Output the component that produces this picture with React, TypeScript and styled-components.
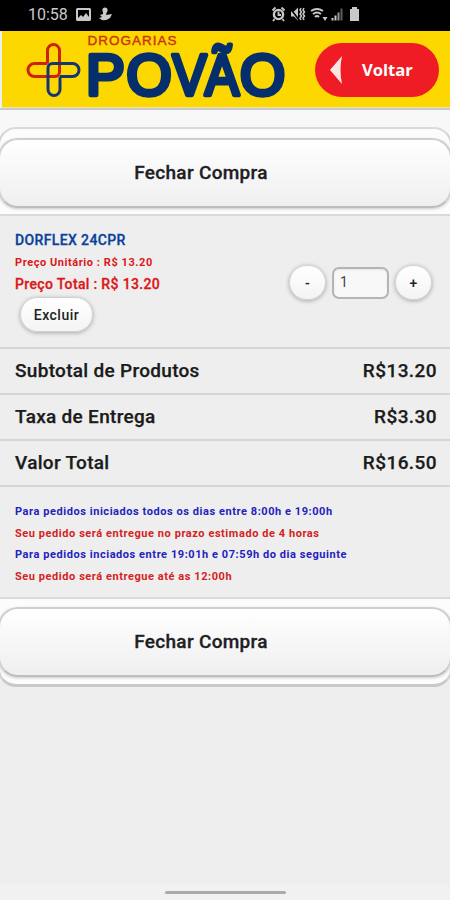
import React from "react";
import styled, { createGlobalStyle } from "styled-components";

const GlobalStyle = createGlobalStyle`
  * { box-sizing: border-box; }
  body { margin: 0; background: #eee; font-family: Roboto, "Liberation Sans", sans-serif; }
`;

const Screen = styled.div`
  width: 450px;
  height: 900px;
  overflow: hidden;
  display: flex;
  flex-direction: column;
  background: #eeeeee;
  color: #1b1b1b;
`;

const StatusBar = styled.header`
  height: 31px;
  flex: none;
  background: #000;
  color: #c9c9c9;
  display: flex;
  align-items: flex-start;
  justify-content: space-between;
  padding: 0 89px 0 28px;
`;

const StatusGroup = styled.div`
  display: flex;
  height: 28px;
  align-items: center;
`;

const Clock = styled.span`
  font-size: 16px;
  width: 48px;
  white-space: nowrap;
`;

const Banner = styled.div`
  height: 77px;
  flex: none;
  margin-left: 2px;
  padding: 12px 11px 0 22px;
  background: #fcd800;
  border-bottom: 1px solid #eee5a0;
  display: flex;
  justify-content: space-between;
`;

const LogoSvg = styled.svg`
  display: block;
  margin-top: -12px;
`;

const BackButton = styled.button`
  width: 124px;
  height: 54px;
  border: 0;
  border-radius: 27px;
  background: #ef1c25;
  color: #fff;
  display: flex;
  align-items: center;
  padding: 0 0 1px 15px;
  gap: 19px;
  font: bold 16.6px "Open Sans", sans-serif;
`;

const Main = styled.main`
  flex: 1;
  border-top: 2px solid #c9c9c9;
  background: linear-gradient(#f8f8f8 60px, #eee 60px);
  display: flex;
  flex-direction: column;
`;

const Spacer = styled.div`
  height: 17px;
  flex: none;
`;

const CheckoutStrip = styled.section<{ $end?: boolean }>`
  height: ${(p) => (p.$end ? 90 : 89)}px;
  flex: none;
  padding-top: ${(p) => (p.$end ? 8 : 9)}px;
  margin: 0 -2px;
  background: #fcfcfc;
  border: 2px solid #d3d3d3;
  border-bottom: ${(p) => (p.$end ? "3px solid #c9c9c9" : "2px solid #dadada")};
  border-top-color: #dadada;
  border-radius: ${(p) => (p.$end ? "0 0 18px 18px" : "18px 18px 0 0")};
`;

const CheckoutButton = styled.button`
  display: block;
  width: 454px;
  height: 70px;
  margin-left: -2px;
  padding: 0 48px 1px 0;
  border: 2px solid #cfcfcf;
  border-bottom-color: #bdbdbd;
  border-radius: 20px;
  background: linear-gradient(#fff, #efefef);
  box-shadow: 0 1px 3px rgba(0, 0, 0, 0.2);
  color: #1d2023;
  font: 500 19px Roboto, sans-serif;
  letter-spacing: 0.3px;
  -webkit-text-stroke: 0.3px;
`;

const Product = styled.section`
  height: 131px;
  flex: none;
  display: flex;
  justify-content: space-between;
  padding: 15px 18px 0 15px;
`;

const ProductInfo = styled.div`
  display: flex;
  flex-direction: column;
  align-items: flex-start;
  white-space: nowrap;
`;

const ProductName = styled.h2`
  margin: 0;
  font: 500 14px/19px Roboto, sans-serif;
  letter-spacing: 0.37px;
  color: #0b429b;
  -webkit-text-stroke: 0.3px;
`;

const Price = styled.span<{ $total?: boolean }>`
  color: #dc1718;
  font-weight: ${(p) => (p.$total ? 500 : 700)};
  font-size: ${(p) => (p.$total ? 14 : 11)}px;
  line-height: ${(p) => (p.$total ? 18 : 16)}px;
  margin-top: ${(p) => (p.$total ? 4 : 5)}px;
  letter-spacing: ${(p) => (p.$total ? 0.34 : 0.56)}px;
  -webkit-text-stroke: ${(p) => (p.$total ? 0.3 : 0)}px;
`;

const PillButton = styled.button<{ $round?: boolean }>`
  width: ${(p) => (p.$round ? 37 : 73)}px;
  height: 35px;
  padding: 0;
  border: 1px solid #d0d0d0;
  border-radius: 18px;
  background: linear-gradient(#fff, #f4f4f4);
  box-shadow: 0 1px 4px rgba(0, 0, 0, 0.3);
  color: #222;
  font: 500 14px Roboto, sans-serif;
`;

const RemoveButton = styled(PillButton)`
  margin: 4px 0 0 5px;
  letter-spacing: 0.5px;
`;

const Stepper = styled.div`
  display: flex;
  align-items: center;
  gap: 6px;
  height: 35px;
  margin-top: 34px;
`;

const QuantityInput = styled.input`
  width: 57px;
  height: 32px;
  border: 2px solid #b5b5b5;
  border-radius: 7px;
  background: #f8f8f8;
  padding: 0 6px 2px;
  color: #444;
  font: 14px Roboto, sans-serif;
  box-shadow: inset 0 1px 2px rgba(0, 0, 0, 0.08);
`;

const TotalRow = styled.div<{ $height: number }>`
  height: ${(p) => p.$height}px;
  flex: none;
  border-top: 2px solid #d6d6d6;
  padding: 0 13px 1px 15px;
  display: flex;
  align-items: center;
  justify-content: space-between;
  font-size: 19px;
  font-weight: 500;
  letter-spacing: 0.3px;
  -webkit-text-stroke: 0.25px;
`;

const Amount = styled.span`
  letter-spacing: 0.42px;
`;

const Notices = styled.section`
  height: 112px;
  flex: none;
  border-top: 2px solid #d6d6d6;
  padding: 14px 15px 0;
  display: flex;
  flex-direction: column;
`;

const Notice = styled.p<{ $alert?: boolean }>`
  margin: 0;
  height: 21.7px;
  font-size: 11px;
  line-height: 21.7px;
  font-weight: 700;
  letter-spacing: 0.56px;
  white-space: nowrap;
  color: ${(p) => (p.$alert ? "#d42222" : "#2422bd")};
`;

const GestureBar = styled.footer`
  height: 16px;
  flex: none;
  background: #f1f1f1;
  padding: 7px 0 0 165px;

  &::before {
    content: "";
    display: block;
    width: 121px;
    height: 3px;
    border-radius: 2px;
    background: #aaa;
  }
`;

const Wordmark = styled.g`
  font: 58px "Liberation Sans", sans-serif;
  fill: #052e6d;
  stroke: #052e6d;
  stroke-width: 4.6px;
  stroke-linejoin: round;
`;

const Logo = () => (
  <LogoSvg width="268" height="76" viewBox="24 31 268 76" fill="none">
    <path
      d="M47.500 63.500V50.500a6 6 0 0 1 12 0V72a4.500 4.500 0 0 1-4.500 4.500H34.500a6.500 6.500 0 0 1 0-13H47.500"
      stroke="#cc2310"
      strokeWidth="3"
    />
    <path
      d="M60 76.500V89.500a6 6 0 0 1-12 0V68a4.500 4.500 0 0 1 4.500-4.500H72.500a6.500 6.500 0 0 1 0 13H60"
      stroke="#143473"
      strokeWidth="3"
    />
    <text
      x="87.500"
      y="45"
      textLength="89"
      fontFamily="Liberation Sans, sans-serif"
      fontSize="13.500"
      fill="#c93310"
      stroke="#c93310"
      strokeWidth="0.400"
    >
      DROGARIAS
    </text>
    <Wordmark>
      <text x="86 126.500" y="94.500">PO</text>
      <text x="172.500" y="94.500" textLength="34" lengthAdjust="spacingAndGlyphs">V</text>
      <text x="205" y="94.500" textLength="34" lengthAdjust="spacingAndGlyphs">Ã</text>
      <text x="240" y="94.500">O</text>
    </Wordmark>
  </LogoSvg>
);

const PictureIcon = () => (
  <svg width="15" height="13" viewBox="0 0 15 13">
    <path
      fill="#c9c9c9"
      fillRule="evenodd"
      d="M1.500 0h12q1.500 0 1.500 1.500v10q0 1.500-1.500 1.500h-12Q0 13 0 11.500v-10Q0 0 1.500 0zM2 2v8l3-3 2 2 3-4 3 4V2z"
    />
  </svg>
);

const FigureIcon = styled.svg`
  margin-left: 8px;
`;

const StatusIcons = () => (
  <svg width="90" height="16" viewBox="0 0 90 16" fill="none" stroke="#c9c9c9">
    <circle cx="7.500" cy="8.500" r="4.600" strokeWidth="2.400" />
    <path d="M7.500 5.500V9H10M1.500 4.500 4.500 1.500M10.500 1.500 13.500 4.500M3.500 13 2 15M11.500 13l1.500 2" strokeWidth="1.800" />
    <path d="M20 5.500h3l4-4v13l-4-4h-3z" fill="#c9c9c9" stroke="none" />
    <path d="M19 2l9 12" stroke="#000" strokeWidth="1.500" />
    <path d="M30 2l-1 2 1.500 2-1.500 2 1.500 2-1.500 2 1 2M33 2l-1 2 1.500 2-1.500 2 1.500 2-1.500 2 1 2" strokeWidth="1.500" />
    <path d="M40 5q6-4 12 0M42 8q4-3 8 0M44 11q2-2 4 0" strokeWidth="2" />
    <path d="M51.500 11h5l-2.500 4z" fill="#c9c9c9" stroke="none" />
    <path d="M61.500 12v2.500M64.500 9.500v5" strokeWidth="2" />
    <path d="M67.500 6.500v8" stroke="#999" strokeWidth="2" />
    <path d="M70.500 2.500v12" stroke="#5e5e5e" strokeWidth="2" />
    <path d="M79 3h2V1h5v2h2v12h-9z" fill="#c9c9c9" stroke="none" />
  </svg>
);

const totals = [
  { label: "Subtotal de Produtos", value: "R$13.20", height: 46 },
  { label: "Taxa de Entrega", value: "R$3.30", height: 46 },
  { label: "Valor Total", value: "R$16.50", height: 46 },
];

const notices = [
  { text: "Para pedidos iniciados todos os dias entre 8:00h e 19:00h", alert: false },
  { text: "Seu pedido será entregue no prazo estimado de 4 horas", alert: true },
  { text: "Para pedidos inciados entre 19:01h e 07:59h do dia seguinte", alert: false },
  { text: "Seu pedido será entregue até as 12:00h", alert: true },
];

export default function App() {
  return (
    <Screen>
      <GlobalStyle />
      <StatusBar>
        <StatusGroup>
          <Clock>10:58</Clock>
          <PictureIcon />
          <FigureIcon width="13" height="14" viewBox="0 0 13 14" fill="#c9c9c9">
            <circle cx="6" cy="3" r="2.600" />
            <path d="M4 4h4l-1 4 6-1-2 4q-4 3-8 2l-3-2 3-1-2-2 3-1z" />
          </FigureIcon>
        </StatusGroup>
        <StatusGroup>
          <StatusIcons />
        </StatusGroup>
      </StatusBar>
      <Banner>
        <Logo />
        <BackButton>
          <svg width="13" height="30" viewBox="0 0 13 30">
            <path d="M12 1Q9 15 12 29L0 15z" fill="#fbe6e6" />
          </svg>
          Voltar
        </BackButton>
      </Banner>
      <Main>
        <Spacer />
        <CheckoutStrip>
          <CheckoutButton>Fechar Compra</CheckoutButton>
        </CheckoutStrip>
        <Product>
          <ProductInfo>
            <ProductName>DORFLEX 24CPR</ProductName>
            <Price>Preço Unitário : R$ 13.20</Price>
            <Price $total>Preço Total : R$ 13.20</Price>
            <RemoveButton>Excluir</RemoveButton>
          </ProductInfo>
          <Stepper>
            <PillButton $round>-</PillButton>
            <QuantityInput defaultValue="1" />
            <PillButton $round>+</PillButton>
          </Stepper>
        </Product>
        {totals.map((row) => (
          <TotalRow key={row.label} $height={row.height}>
            <span>{row.label}</span>
            <Amount>{row.value}</Amount>
          </TotalRow>
        ))}
        <Notices>
          {notices.map((n) => (
            <Notice key={n.text} $alert={n.alert}>
              {n.text}
            </Notice>
          ))}
        </Notices>
        <CheckoutStrip $end>
          <CheckoutButton>Fechar Compra</CheckoutButton>
        </CheckoutStrip>
      </Main>
      <GestureBar />
    </Screen>
  );
}
